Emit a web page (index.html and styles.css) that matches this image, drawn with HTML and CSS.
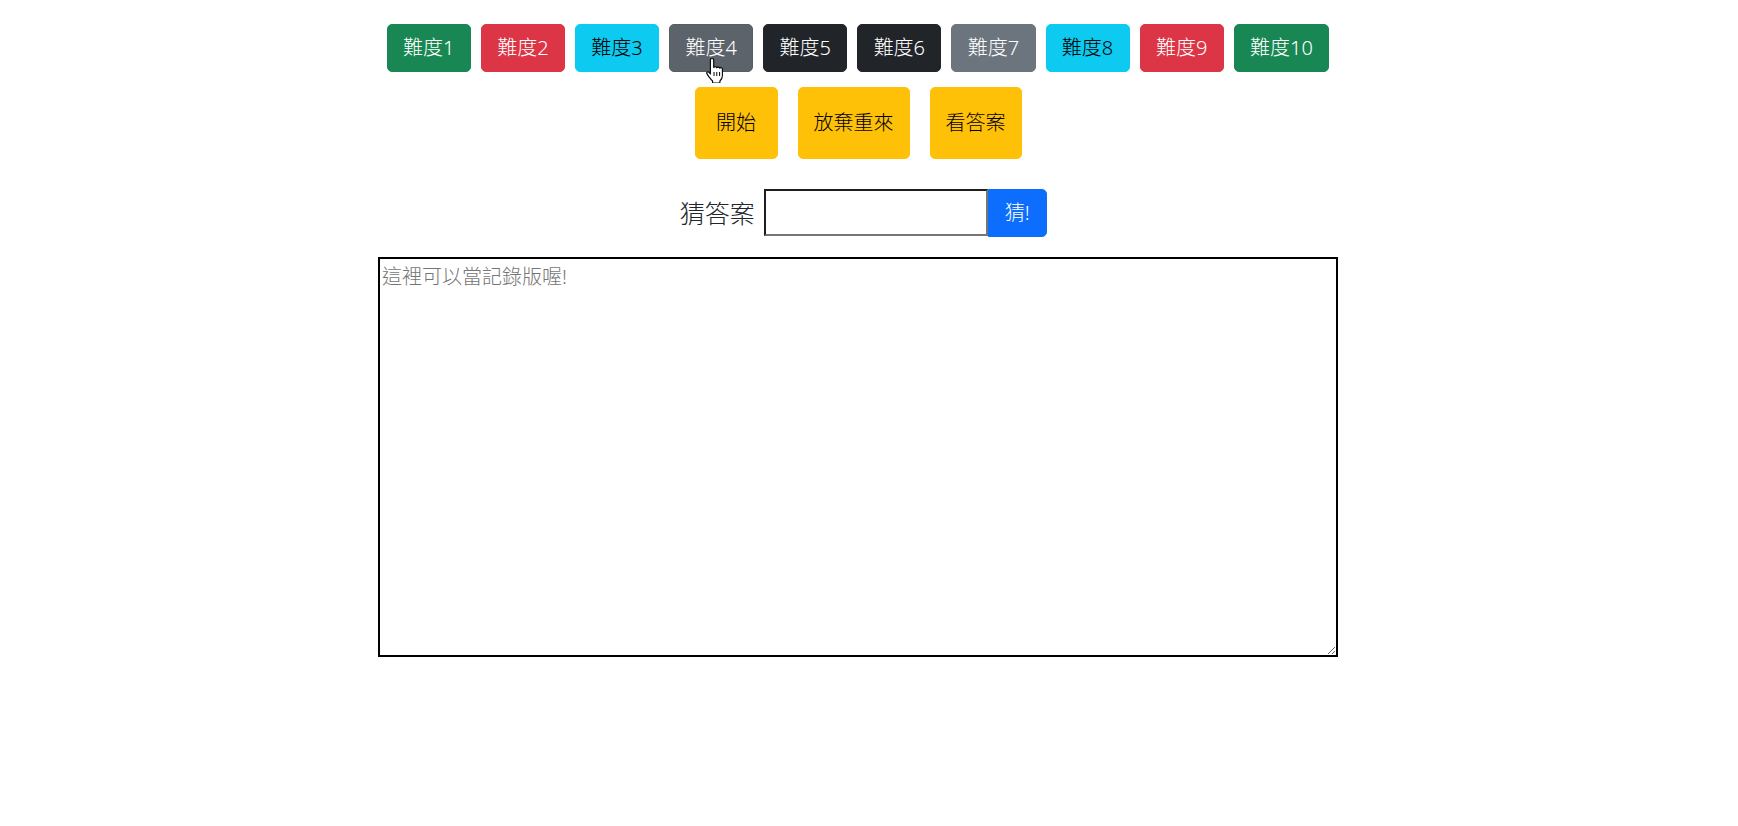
FILE: index.html
```html
<!DOCTYPE html>
<html lang="zh-Hant">
<head>
<meta charset="utf-8">
<title>猜數字</title>
<link rel="stylesheet" href="styles.css">
</head>
<body>
<div class="page">
  <div class="levels">
    <button class="btn btn-success">難度1</button>
    <button class="btn btn-danger">難度2</button>
    <button class="btn btn-info">難度3</button>
    <button class="btn btn-secondary-hover hovered">難度4
      <svg class="cursor" width="20" height="26" viewBox="0 0 20 26">
        <path d="M6 1.5c1 0 1.7.7 1.7 1.7v7.3c.3-.9 2.8-1 3 .3.4-1 2.7-1 3 .4.5-.9 2.6-.7 2.7.8v6.5c0 2.6-1.2 4.4-2.5 5.5v2H6.6v-2C5 22.6 3.8 21 2.6 19.4L.9 16.6c-.7-1.1.9-2.4 1.9-1.4l1.6 1.7V3.2C4.4 2.2 5 1.5 6 1.5z" fill="#fff" stroke="#000" stroke-width="1.1" stroke-linejoin="round"/>
        <path d="M8 15v4M10.8 15v4M13.6 15v4" stroke="#000" stroke-width="1"/>
      </svg>
    </button>
    <button class="btn btn-dark">難度5</button>
    <button class="btn btn-dark">難度6</button>
    <button class="btn btn-secondary">難度7</button>
    <button class="btn btn-info">難度8</button>
    <button class="btn btn-danger">難度9</button>
    <button class="btn btn-success">難度10</button>
  </div>
  <div class="actions">
    <button class="btn btn-warning btn-big btn-start">開始</button>
    <button class="btn btn-warning btn-big">放棄重來</button>
    <button class="btn btn-warning btn-big">看答案</button>
  </div>
  <div class="guess">
    <label class="guess-label" for="ans">猜答案</label>
    <div class="input-group">
      <input id="ans" class="guess-input" type="text">
      <button class="btn btn-primary btn-guess">猜!</button>
    </div>
  </div>
  <div class="log-wrap">
    <textarea class="log" placeholder="這裡可以當記錄版喔!"></textarea>
  </div>
</div>
</body>
</html>
```
FILE: styles.css
```css
html, body {
  margin: 0;
  background: #fff;
}
body {
  font-family: "Segoe UI", "Noto Sans", "Noto Sans CJK TC", sans-serif;
  font-weight: 300;
  color: #212529;
}
.page {
  padding: 24px 22px 0 0;
  display: flex;
  flex-direction: column;
  align-items: center;
}
.levels {
  display: flex;
  gap: 10px;
  justify-content: center;
}
.btn {
  font-family: "Segoe UI", "Noto Sans", "Noto Sans CJK TC", sans-serif;
  font-weight: 300;
  font-size: 20px;
  line-height: 30px;
  padding: 8px 15.35px;
  border: 1px solid transparent;
  border-radius: 5px;
  cursor: pointer;
  position: relative;
  white-space: nowrap;
}
.btn-success { background: #198754; border-color: #198754; color: #fff; }
.btn-danger { background: #dc3545; border-color: #dc3545; color: #fff; }
.btn-info { background: #0dcaf0; border-color: #0dcaf0; color: #000; }
.btn-secondary { background: #6c757d; border-color: #6c757d; color: #fff; }
.btn-secondary-hover { background: #5c636a; border-color: #565e64; color: #fff; }
.btn-dark { background: #212529; border-color: #212529; color: #fff; }
.btn-warning { background: #ffc107; border-color: #ffc107; color: #000; }
.btn-primary { background: #0d6efd; border-color: #0d6efd; color: #fff; }

.cursor {
  position: absolute;
  left: 36px;
  top: 32px;
}

.actions {
  display: flex;
  gap: 20px;
  margin-top: 15px;
}
.btn-big {
  padding: 20px 15px;
}
.btn-start {
  padding: 20px 20.5px;
}

.guess {
  display: flex;
  align-items: center;
  margin-top: 30px;
  padding-left: 10.5px;
}
.guess-label {
  font-size: 25px;
  line-height: 36px;
  color: #212529;
  margin-right: 9px;
  font-family: "Segoe UI", "Noto Sans", "Noto Sans CJK TC", sans-serif;
  font-weight: 300;
}
.input-group {
  display: flex;
  align-items: stretch;
}
.guess-input {
  box-sizing: border-box;
  width: 224px;
  height: 47px;
  border-style: solid;
  border-width: 2px;
  border-color: #1e1e1e #767676 #767676 #1e1e1e;
  padding: 1px 2px;
  font-size: 20px;
  margin: 0;
  outline: none;
}
.btn-guess {
  border-radius: 0 5px 5px 0;
  height: 48px;
  padding: 8px 16px;
  margin-top: 0;
}

.log-wrap {
  margin-top: 20px;
  display: flex;
}
.log {
  box-sizing: border-box;
  width: 960px;
  height: 400px;
  border: 2px solid #000;
  padding: 3px 2px;
  margin: 0;
  font-family: "Segoe UI", "Noto Sans", "Noto Sans CJK TC", sans-serif;
  font-weight: 300;
  font-size: 20px;
  line-height: 30px;
  color: #000;
  resize: both;
}
.log::placeholder {
  color: #757575;
}
```
